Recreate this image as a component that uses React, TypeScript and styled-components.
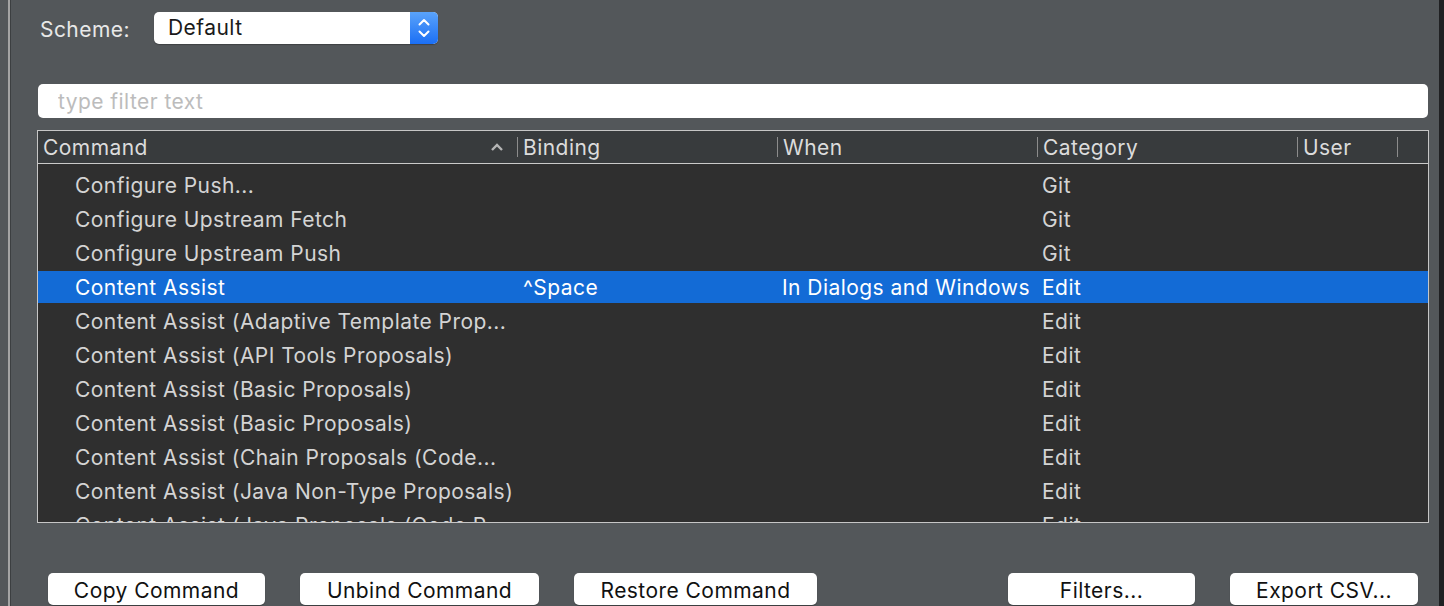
import React from 'react';
import styled, { createGlobalStyle } from 'styled-components';

const GlobalStyle = createGlobalStyle`
  html, body {
    margin: 0;
    padding: 0;
    background: #53575a;
  }
  body {
    font-family: Inter, "Noto Sans", sans-serif;
    overflow: hidden;
  }
  * { box-sizing: border-box; }
`;

const COLUMNS = '479px 260px 260px 260px 100px 1fr';
const TEXT = `
  font-size: 21px;
  letter-spacing: 0.45px;
`;

interface CommandRow {
  command: string;
  binding?: string;
  when?: string;
  category: string;
}

const ROWS: Array<CommandRow> = [
  { command: 'Configure Push...', category: 'Git' },
  { command: 'Configure Upstream Fetch', category: 'Git' },
  { command: 'Configure Upstream Push', category: 'Git' },
  { command: 'Content Assist', binding: '^Space', when: 'In Dialogs and Windows', category: 'Edit' },
  { command: 'Content Assist (Adaptive Template Prop...', category: 'Edit' },
  { command: 'Content Assist (API Tools Proposals)', category: 'Edit' },
  { command: 'Content Assist (Basic Proposals)', category: 'Edit' },
  { command: 'Content Assist (Basic Proposals)', category: 'Edit' },
  { command: 'Content Assist (Chain Proposals (Code...', category: 'Edit' },
  { command: 'Content Assist (Java Non-Type Proposals)', category: 'Edit' },
  { command: 'Content Assist (Java Proposals (Code P...', category: 'Edit' },
];

const SELECTED = 3;

const Window = styled.div`
  height: 606px;
  margin-left: 8px;
  border-left: 2px solid #a4a4a4;
  border-right: 5px solid #1f2022;
  box-shadow: inset 1px 0 0 #3c3f41;
  padding: 12px 11px 0 28px;
  display: flex;
  flex-direction: column;
`;

const SchemeRow = styled.div`
  display: flex;
  align-items: center;
  gap: 24px;
  height: 32px;
  margin-left: 2px;
`;

const Label = styled.span`
  ${TEXT}
  color: #e8e8e8;
  padding-top: 3px;
`;

const Select = styled.div`
  width: 284px;
  height: 32px;
  border-radius: 5px;
  background: #fff;
  display: flex;
  overflow: hidden;
  box-shadow: 0 1px 1px rgba(0, 0, 0, 0.25);
`;

const SelectValue = styled.span`
  flex: 1;
  padding-left: 14px;
  ${TEXT}
  line-height: 32px;
  color: #1a1a1a;
`;

const Stepper = styled.span`
  width: 28px;
  display: flex;
  align-items: center;
  justify-content: center;
  background: linear-gradient(#5aa3fa, #1b6ff5);
`;

const FilterInput = styled.input`
  margin-top: 40px;
  height: 34px;
  width: 100%;
  border: none;
  border-radius: 5px;
  background: #fff;
  padding: 0 0 0 20px;
  font-family: inherit;
  ${TEXT}
  color: #222;
  outline: none;
  &::placeholder {
    color: #bcbcbc;
  }
`;

const Table = styled.div`
  margin: 12px -1px 0 -1px;
  height: 393px;
  border: 1px solid #c6c6c6;
  background: #2f2f2f;
  overflow: hidden;
`;

const Header = styled.div`
  display: grid;
  grid-template-columns: ${COLUMNS};
  height: 33px;
  background: #383b3d;
  border-bottom: 1px solid #cacaca;
`;

const HeaderCell = styled.div<{ $divider?: boolean }>`
  display: flex;
  align-items: center;
  ${TEXT}
  color: #dcdcdc;
  padding-left: ${(p) => (p.$divider ? '0' : '5px')};
  &::before {
    content: '';
    display: ${(p) => (p.$divider ? 'block' : 'none')};
    width: 1px;
    height: 20px;
    margin-right: 5px;
    background: #8c8c8c;
  }
`;

const HeaderTitle = styled.span`
  flex: 1;
`;

const SortMark = styled.svg`
  margin-right: 12px;
`;

const Body = styled.div`
  padding-top: 5px;
  display: flex;
  flex-direction: column;
  gap: 2px;
`;

const Row = styled.div<{ $selected?: boolean }>`
  display: grid;
  grid-template-columns: ${COLUMNS};
  height: 32px;
  align-items: center;
  background: ${(p) => (p.$selected ? '#136bd6' : 'transparent')};
  color: ${(p) => (p.$selected ? '#ffffff' : '#d4d4d4')};
  ${TEXT}
`;

const Cell = styled.span<{ $indent: number }>`
  padding-left: ${(p) => p.$indent}px;
  white-space: nowrap;
  overflow: hidden;
`;

const ButtonBar = styled.div`
  margin-top: 50px;
  display: flex;
  gap: 35px;
  padding: 0 10px;
`;

const Button = styled.button<{ $width: number; $push?: boolean }>`
  width: ${(p) => p.$width}px;
  height: 32px;
  margin-left: ${(p) => (p.$push ? 'auto' : '0')};
  border: none;
  border-radius: 5px;
  background: #fff;
  box-shadow: 0 1px 1px rgba(0, 0, 0, 0.3);
  font-family: inherit;
  ${TEXT}
  color: #111;
  padding: 2px 0 0 0;
`;

const Chevrons = () => (
  <svg width="14" height="22" viewBox="0 0 14 22">
    <path d="M2.5 7.5 L7 3 L11.5 7.5" fill="none" stroke="#fff" strokeWidth="2" strokeLinecap="round" strokeLinejoin="round" />
    <path d="M2.5 14.5 L7 19 L11.5 14.5" fill="none" stroke="#fff" strokeWidth="2" strokeLinecap="round" strokeLinejoin="round" />
  </svg>
);

const App: React.FC = () => (
  <>
    <GlobalStyle />
    <Window>
      <SchemeRow>
        <Label>Scheme:</Label>
        <Select>
          <SelectValue>Default</SelectValue>
          <Stepper><Chevrons /></Stepper>
        </Select>
      </SchemeRow>

      <FilterInput placeholder="type filter text" />

      <Table>
        <Header>
          <HeaderCell>
            <HeaderTitle>Command</HeaderTitle>
            <SortMark width="16" height="10" viewBox="0 0 16 10">
              <path d="M3 8 L8 3 L13 8" fill="none" stroke="#b5b5b5" strokeWidth="2.4" />
            </SortMark>
          </HeaderCell>
          <HeaderCell $divider>Binding</HeaderCell>
          <HeaderCell $divider>When</HeaderCell>
          <HeaderCell $divider>Category</HeaderCell>
          <HeaderCell $divider>User</HeaderCell>
          <HeaderCell $divider />
        </Header>
        <Body>
          {ROWS.map((row, i) => (
            <Row key={i} $selected={i === SELECTED}>
              <Cell $indent={37}>{row.command}</Cell>
              <Cell $indent={6}>{row.binding}</Cell>
              <Cell $indent={5}>{row.when}</Cell>
              <Cell $indent={5}>{row.category}</Cell>
            </Row>
          ))}
        </Body>
      </Table>

      <ButtonBar>
        <Button $width={217}>Copy Command</Button>
        <Button $width={239}>Unbind Command</Button>
        <Button $width={243}>Restore Command</Button>
        <Button $width={187} $push>Filters...</Button>
        <Button $width={188}>Export CSV...</Button>
      </ButtonBar>
    </Window>
  </>
);

export default App;
